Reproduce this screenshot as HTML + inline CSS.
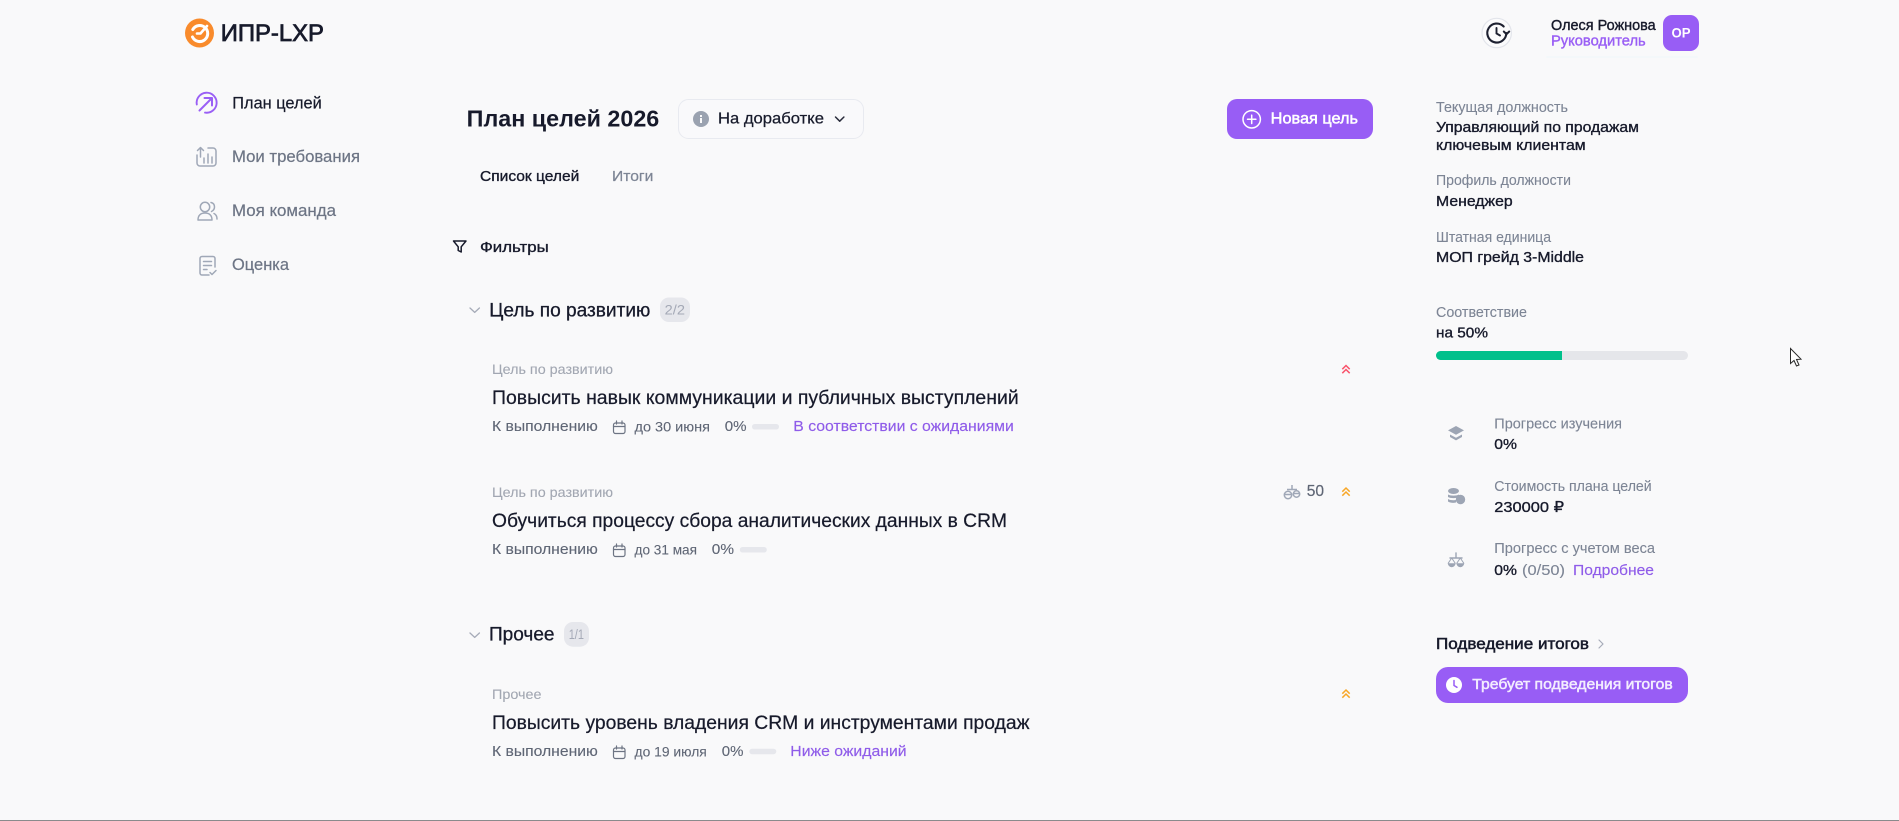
<!DOCTYPE html>
<html lang="ru"><head><meta charset="utf-8"><title>План целей</title>
<style>
html,body{margin:0;padding:0;width:1899px;height:821px;overflow:hidden;background:#f9f9fa}
svg{display:block;position:absolute;left:0;top:0}
text{font-family:"Liberation Sans","DejaVu Sans",sans-serif;font-size:15px;fill:#171a2b}
.m{stroke:#171a2b;stroke-width:.35px}
.g{fill:#7d8595;stroke:#7d8595;stroke-width:.12px}
.n{fill:#6d7585;stroke:#6d7585;stroke-width:.22px;font-size:17px}
.p{fill:#8f5ce9;stroke:#8f5ce9;stroke-width:.15px}
.l{fill:#a2a7b2;stroke:#a2a7b2;stroke-width:.1px;font-size:14px}
.t{font-size:19px;stroke-width:.22px}
.d{fill:#5f6675;stroke:#5f6675;stroke-width:.12px}
.s{fill:#5f6675;stroke:#5f6675;stroke-width:.1px;font-size:14px}
.i{fill:none;stroke:#a0a8b7;stroke-width:1.5;stroke-linecap:round;stroke-linejoin:round}
.f{fill:#9da5b4}
</style></head><body>
<svg width="1899" height="821" viewBox="0 0 1899 821" xmlns="http://www.w3.org/2000/svg">
<rect width="1899" height="821" fill="#f9f9fa"/>
<rect x="0" y="820" width="1899" height="1" fill="#8a8a8c"/>

<!-- logo -->
<circle cx="199.5" cy="33" r="14.5" fill="#f98b2c"/>
<path d="M192.800 29.500a8 8 0 1 1-.3 7.500" fill="none" stroke="#fff" stroke-width="3" stroke-linecap="round"/>
<path d="M197 33.500h3.500l6.500-7.500" fill="none" stroke="#fff" stroke-width="2.600" stroke-linecap="round"/>
<text x="220.7" y="41" textLength="103.3" lengthAdjust="spacingAndGlyphs" class="m" style="font-size:24px;stroke-width:.75px">ИПР-LXP</text>

<!-- nav -->
<path d="M196.800 104.500A10 10 0 1 1 205 112.600" fill="none" stroke="#9a5ff5" stroke-width="1.900" stroke-linecap="round"/>
<path d="M199.500 110.500l12-12M204.500 98h7.500v7.500" fill="none" stroke="#9a5ff5" stroke-width="2" stroke-linecap="round" stroke-linejoin="round"/>
<text x="232.3" y="108.3" textLength="89.4" lengthAdjust="spacingAndGlyphs" class="m" style="font-size:17px;stroke-width:.22px">План целей</text>

<path class="i" d="M208 148h5a3 3 0 0 1 3 3v12a3 3 0 0 1-3 3h-13a3 3 0 0 1-3-3v-8M200.500 157v-9M197.500 150.500l3-3 3 3M204 163v-5M208 163v-9M212 163v-6"/>
<text x="232" y="162" textLength="128" lengthAdjust="spacingAndGlyphs" class="n">Мои требования</text>

<circle class="i" cx="205" cy="207" r="4.700"/>
<path class="i" d="M198 220c0-5 3-7 7-7s7 2 7 7zM211 202.500c2.500.5 3.500 2.500 3.500 4.500s-1 3.500-3 4.500M214 213.500c2 1 3 3 3 5.500"/>
<text x="232" y="216" textLength="104" lengthAdjust="spacingAndGlyphs" class="n">Моя команда</text>

<path class="i" d="M215 267v-8.500a2 2 0 0 0-2-2h-11a2 2 0 0 0-2 2v14.500a2 2 0 0 0 2 2h7M203.500 261.500h8M203.500 265.500h8M203.500 269.500h3.500M210 272.500l2 2 4-4"/>
<text x="232" y="270" textLength="57" lengthAdjust="spacingAndGlyphs" class="n">Оценка</text>

<!-- header right -->
<circle cx="1496.700" cy="33" r="14.700" fill="#fbfbfc" stroke="#e3e5eb" stroke-width="1.200"/>
<path d="M1506.300 33a9.500 9.500 0 1 1-2.600-6.500" fill="none" stroke="#1d2030" stroke-width="2.100" stroke-linecap="round"/>
<path d="M1503.800 31.500l2.700 2.700 2.700-2.700" fill="none" stroke="#1d2030" stroke-width="2" stroke-linecap="round" stroke-linejoin="round"/>
<path d="M1496.500 28v5.500l3.500 2" fill="none" stroke="#1d2030" stroke-width="1.900" stroke-linecap="round"/>
<text x="1551" y="30" textLength="104.700" lengthAdjust="spacingAndGlyphs" class="m" style="stroke-width:.4px">Олеся Рожнова</text>
<text x="1551" y="45.700" textLength="94.700" lengthAdjust="spacingAndGlyphs" style="fill:#9a5ff5;stroke:#9a5ff5;stroke-width:.4px">Руководитель</text>
<rect x="1663" y="15" width="36" height="36" rx="9" fill="#985df5"/>
<text x="1671.500" y="37.500" textLength="19" lengthAdjust="spacingAndGlyphs" style="fill:#fff;font-weight:bold;font-size:13.500px">ОР</text>
<rect x="1546" y="56.500" width="152" height="1" rx=".5" fill="#eff8fa"/>

<!-- title row -->
<text x="466.700" y="126.700" textLength="192.600" lengthAdjust="spacingAndGlyphs" style="font-size:23px;font-weight:bold">План целей 2026</text>
<rect x="678.500" y="99.500" width="185" height="39" rx="10" fill="#f9f9fb" stroke="#e8eaf0"/>
<circle cx="701" cy="119" r="8" fill="#9aa2b0"/>
<rect x="700" y="118" width="2" height="5" fill="#f9f9fa"/><rect x="700" y="115" width="2" height="2" fill="#f9f9fa"/>
<text x="718" y="123.300" textLength="106" lengthAdjust="spacingAndGlyphs" class="m" style="font-size:16px;stroke-width:.25px">На доработке</text>
<path d="M835.500 117l4.200 4.200 4.200-4.200" fill="none" stroke="#2a2d3c" stroke-width="1.500" stroke-linecap="round" stroke-linejoin="round"/>
<rect x="1227" y="99" width="146" height="40" rx="10" fill="#985df5"/>
<circle cx="1251.700" cy="119.300" r="8.700" fill="none" stroke="#fff" stroke-width="1.500"/>
<path d="M1247.500 119.300h8.400M1251.700 115.100v8.400" stroke="#fff" stroke-width="1.500" stroke-linecap="round"/>
<text x="1270.700" y="123.300" textLength="87.300" lengthAdjust="spacingAndGlyphs" style="fill:#fff;stroke:#fff;font-size:16px;stroke-width:.5px">Новая цель</text>

<!-- tabs -->
<text x="480" y="181" textLength="99.300" lengthAdjust="spacingAndGlyphs" class="m">Список целей</text>
<text x="612" y="181" textLength="41.300" lengthAdjust="spacingAndGlyphs" class="g" style="stroke-width:.25px">Итоги</text>

<!-- filter -->
<path d="M453.500 241h12.500l-4.800 5.800v5.200l-3-1.500v-3.700z" fill="none" stroke="#171a2b" stroke-width="1.500" stroke-linejoin="round"/>
<text x="480" y="252" textLength="68.700" lengthAdjust="spacingAndGlyphs" class="m">Фильтры</text>

<!-- group 1 -->
<path d="M470 308l4.700 4.400 4.700-4.400" fill="none" stroke="#a6abb8" stroke-width="1.300" stroke-linecap="round" stroke-linejoin="round"/>
<text x="489.300" y="316.700" textLength="161" lengthAdjust="spacingAndGlyphs" class="m" style="font-size:19px;stroke-width:.3px">Цель по развитию</text>
<rect x="660" y="297.500" width="30" height="24.500" rx="9" fill="#e6e7ec"/>
<text x="664.700" y="314.300" textLength="20.300" lengthAdjust="spacingAndGlyphs" style="fill:#a4a9b6;font-size:14px">2/2</text>

<!-- item 1 -->
<text x="492" y="374" textLength="121" lengthAdjust="spacingAndGlyphs" class="l">Цель по развитию</text>
<text x="492" y="404" textLength="526.700" lengthAdjust="spacingAndGlyphs" class="m t">Повысить навык коммуникации и публичных выступлений</text>
<text x="492" y="431" textLength="105.800" lengthAdjust="spacingAndGlyphs" class="d">К выполнению</text>
<g class="i" style="stroke:#6d7483;stroke-width:1.200"><rect x="613.500" y="423" width="11.500" height="10.500" rx="2"/><path d="M613.500 426.500h11.500M616.500 421v3M622 421v3"/></g>
<text x="634.500" y="431.500" textLength="75.500" lengthAdjust="spacingAndGlyphs" class="s">до 30 июня</text>
<text x="724.800" y="431" textLength="21.800" lengthAdjust="spacingAndGlyphs" class="d">0%</text>
<rect x="752" y="424" width="27" height="5.500" rx="2.700" fill="#e6e7ec"/>
<text x="793.300" y="431" textLength="220.500" lengthAdjust="spacingAndGlyphs" class="p">В соответствии с ожиданиями</text>
<path d="M1342.300 369.200l3.700-3.700 3.700 3.700M1342.300 373.200l3.700-3.700 3.700 3.700" fill="none" stroke="#f9536b" stroke-width="1.500"/>

<!-- item 2 -->
<text x="492" y="497" textLength="121" lengthAdjust="spacingAndGlyphs" class="l">Цель по развитию</text>
<text x="492" y="527" textLength="515" lengthAdjust="spacingAndGlyphs" class="m t">Обучиться процессу сбора аналитических данных в CRM</text>
<text x="492" y="554" textLength="105.800" lengthAdjust="spacingAndGlyphs" class="d">К выполнению</text>
<g class="i" style="stroke:#6d7483;stroke-width:1.200"><rect x="613.500" y="546" width="11.500" height="10.500" rx="2"/><path d="M613.500 549.500h11.500M616.500 544v3M622 544v3"/></g>
<text x="634.500" y="554.500" textLength="62.500" lengthAdjust="spacingAndGlyphs" class="s">до 31 мая</text>
<text x="711.800" y="554" textLength="22.200" lengthAdjust="spacingAndGlyphs" class="d">0%</text>
<rect x="739.800" y="547" width="27" height="5.500" rx="2.700" fill="#e6e7ec"/>
<g fill="none" stroke="#a0a8b7" stroke-width="1.500"><path d="M1292 485v4M1287 489.500h10"/><circle cx="1288" cy="495" r="3.700"/><circle cx="1296.500" cy="494" r="3.200"/><path d="M1284.500 494.500h7M1293.300 493.500h6.500"/></g>
<text x="1306.700" y="496" textLength="17.300" lengthAdjust="spacingAndGlyphs" class="d" style="font-size:15.500px;stroke-width:.2px">50</text>
<path d="M1342.300 491.700l3.700-3.700 3.700 3.700M1342.300 495.700l3.700-3.700 3.700 3.700" fill="none" stroke="#f8a727" stroke-width="1.500"/>

<!-- group 2 -->
<path d="M470 633l4.700 4.400 4.700-4.400" fill="none" stroke="#a6abb8" stroke-width="1.300" stroke-linecap="round" stroke-linejoin="round"/>
<text x="489" y="640.700" textLength="65.500" lengthAdjust="spacingAndGlyphs" class="m" style="font-size:19px;stroke-width:.3px">Прочее</text>
<rect x="564" y="622" width="25" height="24.700" rx="9" fill="#e6e7ec"/>
<text x="568.700" y="639" textLength="15.300" lengthAdjust="spacingAndGlyphs" style="fill:#a4a9b6;font-size:14px">1/1</text>

<!-- item 3 -->
<text x="492" y="699" textLength="49.500" lengthAdjust="spacingAndGlyphs" class="l">Прочее</text>
<text x="492" y="729" textLength="537.500" lengthAdjust="spacingAndGlyphs" class="m t">Повысить уровень владения CRM и инструментами продаж</text>
<text x="492" y="756" textLength="105.800" lengthAdjust="spacingAndGlyphs" class="d">К выполнению</text>
<g class="i" style="stroke:#6d7483;stroke-width:1.200"><rect x="613.500" y="748" width="11.500" height="10.500" rx="2"/><path d="M613.500 751.500h11.500M616.500 746v3M622 746v3"/></g>
<text x="634.500" y="756.500" textLength="72.300" lengthAdjust="spacingAndGlyphs" class="s">до 19 июля</text>
<text x="721.800" y="756" textLength="21.700" lengthAdjust="spacingAndGlyphs" class="d">0%</text>
<rect x="749.300" y="748.700" width="27" height="5.500" rx="2.700" fill="#e6e7ec"/>
<text x="790.300" y="756" textLength="116.300" lengthAdjust="spacingAndGlyphs" class="p">Ниже ожиданий</text>
<path d="M1342.300 693.700l3.700-3.700 3.700 3.700M1342.300 697.700l3.700-3.700 3.700 3.700" fill="none" stroke="#f8a727" stroke-width="1.500"/>

<!-- right column -->
<text x="1436" y="112" textLength="132" lengthAdjust="spacingAndGlyphs" class="g">Текущая должность</text>
<text x="1436" y="132" textLength="203" lengthAdjust="spacingAndGlyphs" class="m">Управляющий по продажам</text>
<text x="1436" y="150" textLength="149.700" lengthAdjust="spacingAndGlyphs" class="m">ключевым клиентам</text>
<text x="1436" y="185" textLength="135" lengthAdjust="spacingAndGlyphs" class="g">Профиль должности</text>
<text x="1436" y="206" textLength="76.700" lengthAdjust="spacingAndGlyphs" class="m">Менеджер</text>
<text x="1436" y="242" textLength="115" lengthAdjust="spacingAndGlyphs" class="g">Штатная единица</text>
<text x="1436" y="262" textLength="148" lengthAdjust="spacingAndGlyphs" class="m">МОП грейд 3-Middle</text>
<text x="1436" y="317" textLength="91" lengthAdjust="spacingAndGlyphs" class="g">Соответствие</text>
<text x="1436" y="337.700" textLength="52" lengthAdjust="spacingAndGlyphs" class="m">на 50%</text>
<rect x="1436" y="351" width="252" height="9" rx="4.500" fill="#e5e6ea"/>
<path d="M1440.500 351H1562v9h-121.500a4.500 4.500 0 0 1 0-9z" fill="#00c08b"/>

<!-- cursor -->
<path d="M1790.500 348.500v15l3.500-3 2.500 5.500 2.500-1-2.500-5.500 4.500-.3z" fill="#fff" stroke="#2a2a2a" stroke-width="1"/>

<!-- stat icons -->
<path class="f" d="M1456 426l8 4.400-8 4.400-8-4.400z"/>
<path class="f" d="M1450 434.500l6 3.200 6-3.200v2.500l-6 3.400-6-3.400z"/>
<text x="1494.300" y="428.300" textLength="127.700" lengthAdjust="spacingAndGlyphs" class="g">Прогресс изучения</text>
<text x="1494.300" y="449" textLength="22.700" lengthAdjust="spacingAndGlyphs" class="m">0%</text>

<ellipse class="f" cx="1453.500" cy="491" rx="5.500" ry="3"/>
<path class="f" d="M1448 494.500c2.500 1.500 8.500 1.500 11 0v2.500c-2.500 1.500-8.500 1.500-11 0zM1448 499c2 1.300 6 1.500 8 1v2.500c-3 .7-6 .3-8-1z"/>
<circle class="f" cx="1460.500" cy="499.500" r="4.700"/>
<text x="1494.300" y="491" textLength="157.400" lengthAdjust="spacingAndGlyphs" class="g">Стоимость плана целей</text>
<text x="1494.300" y="512" textLength="69.700" lengthAdjust="spacingAndGlyphs" class="m">230000 ₽</text>

<path d="M1456 553v5M1450 558h12" fill="none" stroke="#9da5b4" stroke-width="1.400" stroke-linecap="round"/>
<path d="M1451.700 558l-3.700 5.500M1451.700 558l3.700 5.500M1460.300 558l-3.700 5.500M1460.300 558l3.700 5.500" fill="none" stroke="#9da5b4" stroke-width="1"/>
<path class="f" d="M1447.800 563.300h7.800a3.900 3.900 0 0 1-7.800 0zM1456.400 563.300h7.800a3.900 3.900 0 0 1-7.800 0z"/>
<text x="1494.300" y="553" textLength="160.700" lengthAdjust="spacingAndGlyphs" class="g">Прогресс с учетом веса</text>
<text x="1494.300" y="575" textLength="22.700" lengthAdjust="spacingAndGlyphs" class="m">0%</text>
<text x="1522" y="575" textLength="43" lengthAdjust="spacingAndGlyphs" class="g">(0/50)</text>
<text x="1573" y="575" textLength="81" lengthAdjust="spacingAndGlyphs" class="p">Подробнее</text>

<text x="1436" y="649" textLength="153" lengthAdjust="spacingAndGlyphs" class="m" style="font-size:15.500px;stroke-width:.5px">Подведение итогов</text>
<path d="M1599 640l4 4-4 4" fill="none" stroke="#a6abb8" stroke-width="1.200" stroke-linecap="round" stroke-linejoin="round"/>
<rect x="1436" y="667" width="252" height="36" rx="12" fill="#985df5"/>
<circle cx="1454" cy="685" r="8" fill="#fff"/>
<path d="M1454 680.500v5l3 1.800" fill="none" stroke="#985df5" stroke-width="1.500" stroke-linecap="round"/>
<text x="1472.300" y="689" textLength="200.400" lengthAdjust="spacingAndGlyphs" style="fill:#f3edfe;stroke:#f3edfe;stroke-width:.5px">Требует подведения итогов</text>
</svg>
</body></html>
